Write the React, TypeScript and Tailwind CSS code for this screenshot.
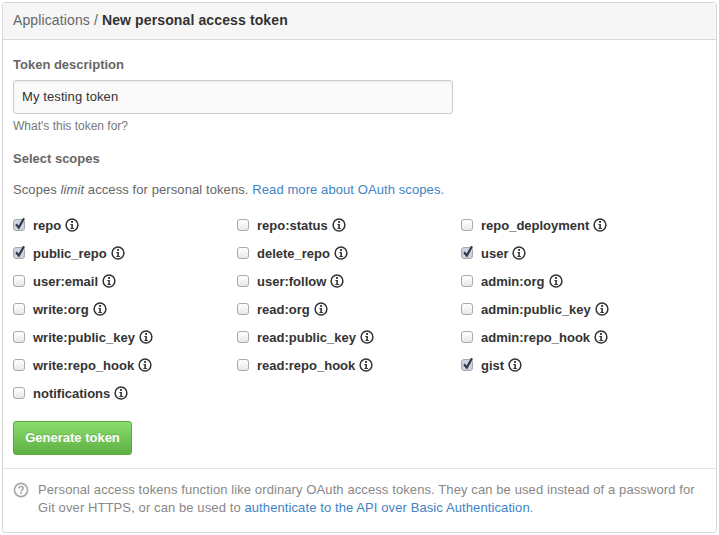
const SCOPES: { name: string; checked?: boolean }[] = [
  { name: "repo", checked: true },
  { name: "repo:status" },
  { name: "repo_deployment" },
  { name: "public_repo", checked: true },
  { name: "delete_repo" },
  { name: "user", checked: true },
  { name: "user:email" },
  { name: "user:follow" },
  { name: "admin:org" },
  { name: "write:org" },
  { name: "read:org" },
  { name: "admin:public_key" },
  { name: "write:public_key" },
  { name: "read:public_key" },
  { name: "admin:repo_hook" },
  { name: "write:repo_hook" },
  { name: "read:repo_hook" },
  { name: "gist", checked: true },
  { name: "notifications" },
];

function InfoIcon() {
  return (
    <svg width="14" height="14" viewBox="0 0 14 14" fill="none" className="shrink-0">
      <circle cx="7" cy="7" r="5.9" stroke="#333" strokeWidth="1.5" />
      <rect x="6.1" y="3" width="1.9" height="1.9" fill="#333" />
      <path d="M5.4 6.1H7.9V9.9H8.9V10.9H5.4V9.9H6.3V7.1H5.4Z" fill="#333" />
    </svg>
  );
}

function HelpIcon() {
  return (
    <svg width="16" height="16" viewBox="0 0 16 16" fill="none" className="shrink-0">
      <circle cx="8" cy="8" r="6.6" stroke="#a8a8a8" strokeWidth="1.7" />
      <path d="M5.8 6.4C5.9 5.1 6.8 4.5 8 4.5C9.3 4.5 10.2 5.2 10.2 6.3C10.2 7.7 8.2 7.8 8.2 9.2" stroke="#a8a8a8" strokeWidth="1.6" />
      <rect x="7.2" y="10.2" width="1.9" height="1.8" fill="#a8a8a8" />
    </svg>
  );
}

function Checkbox({ checked }: { checked?: boolean }) {
  return (
    <span className={`relative w-[12px] h-[12px] rounded-[3px] border border-[#a9a9a9] shrink-0 ${checked ? "bg-[#ccd3e0]" : "bg-gradient-to-b from-[#fff] to-[#e8e8e8]"}`}>
      {checked && (
        <svg width="14" height="15" viewBox="0 0 14 15" className="absolute left-[-1px] top-[-4px]" fill="none">
          <path d="M3 8.2L5.8 11.6L11 2.2" stroke="#333b4a" strokeWidth="2.2" />
        </svg>
      )}
    </span>
  );
}

function Scope({ name, checked }: { name: string; checked?: boolean }) {
  return (
    <label className="h-[28px] flex items-center">
      <Checkbox checked={checked} />
      <span className="ml-[8px] pt-[2px] text-[13px] font-bold text-[#333]">{name}</span>
      <span className="ml-[4px]"><InfoIcon /></span>
    </label>
  );
}

export default function App() {
  return (
    <div className="w-[719px] h-[535px] bg-white pt-[2px] pl-[2px] font-['Liberation_Sans',Arial,sans-serif]">
      <div className="w-[715px] h-[531px] border border-[#d8d8d8] rounded-[3px] flex flex-col">
        {/* Header */}
        <div className="h-[37px] shrink-0 bg-[#f6f6f6] border-b border-[#d8d8d8] px-[10px] pb-[1px] flex items-center text-[14px] tracking-[0.12px] text-[#666]">
          <span>Applications /&nbsp;</span>
          <strong className="text-[#333]">New personal access token</strong>
        </div>

        {/* Form */}
        <div className="px-[10px] pt-[17px] flex-1">
          <div className="text-[13px] font-bold text-[#666] leading-[16px]">Token description</div>
          <input
            type="text"
            defaultValue="My testing token"
            className="block mt-[7px] w-[440px] h-[34px] px-[8px] pb-[1px] text-[13px] tracking-[0.1px] text-[#333] bg-[#fafafa] border border-[#ccc] rounded-[3px] shadow-[inset_0_1px_2px_rgba(0,0,0,0.07)] outline-none"
          />
          <p className="mt-[5px] text-[12px] leading-[14px] text-[#777]">What's this token for?</p>
          <div className="mt-[18px] text-[13px] font-bold text-[#666] leading-[16px]">Select scopes</div>
          <p className="mt-[15px] text-[13px] tracking-[0.09px] leading-[16px] text-[#666]">
            Scopes <em>limit</em> access for personal tokens.{" "}
            <a className="text-[#4183c4]">Read more about OAuth scopes.</a>
          </p>
          <div className="mt-[13px] grid grid-cols-[224px_224px_224px]">
            {SCOPES.map(s => (
              <Scope key={s.name} name={s.name} checked={s.checked} />
            ))}
          </div>
          <button
            type="button"
            className="block mt-[14px] w-[119px] h-[34px] rounded-[3px] border border-[#5ca941] bg-gradient-to-b from-[#8add6d] to-[#60b044] text-[13px] font-bold text-white [text-shadow:0_-1px_0_rgba(0,0,0,0.15)]"
          >
            Generate token
          </button>
        </div>

        {/* Footer note */}
        <div className="h-[64px] shrink-0 border-t border-[#e5e5e5] px-[10px] pt-[12px] flex gap-[9px]">
          <span className="mt-[1px]"><HelpIcon /></span>
          <p className="w-[665px] text-[13px] tracking-[0.1px] leading-[18px] text-[#888]">
            Personal access tokens function like ordinary OAuth access tokens. They can be used instead of a password for Git over HTTPS, or can be used to{" "}
            <a className="text-[#4183c4]">authenticate to the API over Basic Authentication</a>.
          </p>
        </div>
      </div>
    </div>
  );
}
